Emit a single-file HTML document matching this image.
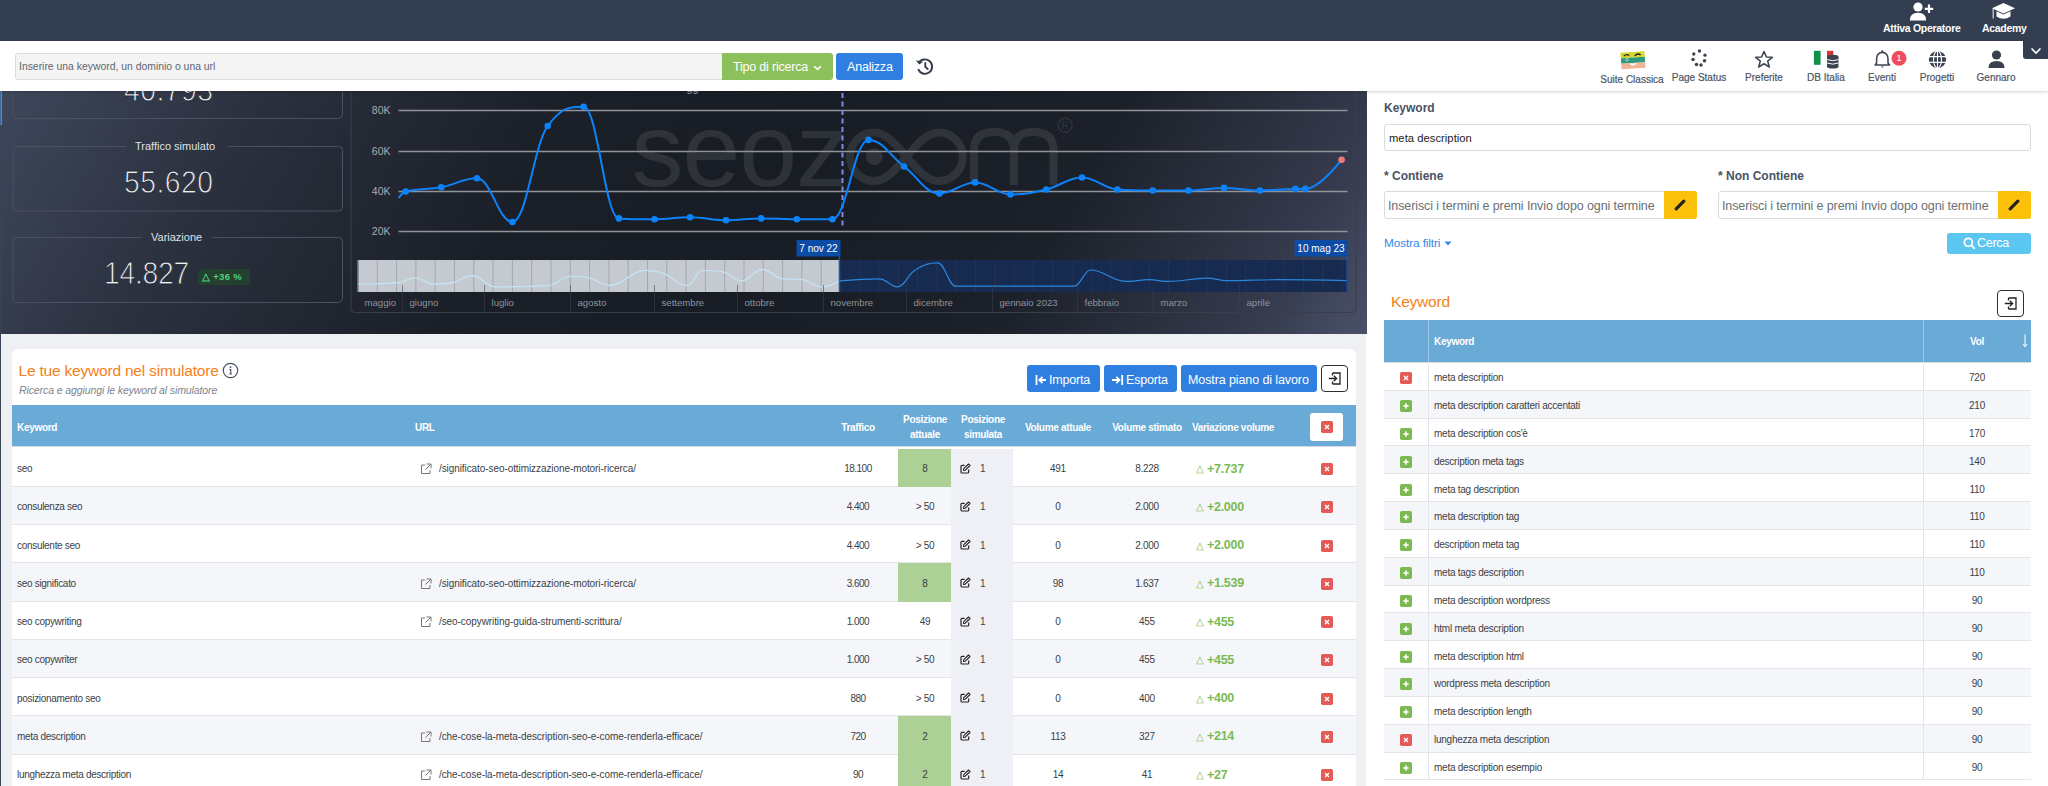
<!DOCTYPE html>
<html><head><meta charset="utf-8">
<style>
*{box-sizing:border-box}
html,body{margin:0;padding:0}
body{width:2048px;height:786px;overflow:hidden;position:relative;font-family:"Liberation Sans",sans-serif;background:#fff;color:#333}
.abs{position:absolute}
.t{position:absolute;white-space:nowrap;line-height:1}
#topbar{left:0;top:0;width:2048px;height:41px;background:#343e51}
#toolbar{left:0;top:41px;width:2048px;height:50px;background:#fff;box-shadow:0 1px 3px rgba(0,0,0,.18);z-index:5}
#chart{left:0;top:90px;width:1367px;height:244px;background:linear-gradient(120deg,#3f475c 0%,#2a303d 18%,#1b1f28 38%,#181c24 55%,#1c2029 75%,#353b4d 92%,#4a5068 100%);overflow:hidden}
#lower{left:0;top:334px;width:1366px;height:452px;background:#eff0f4}
#card{left:12px;top:349px;width:1344px;height:460px;background:#fff;border-radius:6px}
#right{left:1367px;top:90px;width:681px;height:696px;background:#fff}
.ico{position:absolute}
.lbl{position:absolute;font-size:10px;color:#4b5565;-webkit-text-stroke:0.2px #4b5565;white-space:nowrap;line-height:1;transform:translateX(-50%)}
</style></head><body>
<div id="topbar" class="abs">
  <!-- user plus icon -->
  <svg class="ico" style="left:1909px;top:2px" width="26" height="19" viewBox="0 0 26 19">
    <circle cx="9" cy="5" r="4.6" fill="#fff"/>
    <path d="M0.8 18.5 Q0.8 10.8 9 10.8 Q17.2 10.8 17.2 18.5 Z" fill="#fff"/>
    <path d="M20 2.5 V11 M15.8 6.8 H24.2" stroke="#fff" stroke-width="2.2" fill="none"/>
  </svg>
  <div class="t" style="left:1883px;top:23px;font-size:10.5px;color:#fff;font-weight:bold;letter-spacing:-0.3px">Attiva Operatore</div>
  <!-- graduation cap -->
  <svg class="ico" style="left:1991px;top:2px" width="25" height="19" viewBox="0 0 25 19">
    <path d="M12.5 1 L24 6.3 L12.5 11.6 L1 6.3 Z" fill="#fff"/>
    <path d="M5.5 9.2 V14.5 Q12.5 19 19.5 14.5 V9.2 L12.5 12.6 Z" fill="#fff"/>
    <path d="M2.2 7 V16.5" stroke="#d8dbe0" stroke-width="1.2"/>
  </svg>
  <div class="t" style="left:1982px;top:23px;font-size:10.5px;color:#fff;font-weight:bold;letter-spacing:-0.3px">Academy</div>
</div>
<div id="toolbar" class="abs">
  <div class="abs" style="left:15px;top:12px;width:708px;height:27px;background:#f4f4f5;border:1px solid #dcdcdc;border-radius:3px 0 0 3px"></div>
  <div class="t" style="left:19px;top:20.5px;font-size:10.4px;color:#5f6670">Inserire una keyword, un dominio o una url</div>
  <div class="abs" style="left:722px;top:12px;width:111px;height:27px;background:#8bc05b;border-radius:0 3px 3px 0"></div>
  <div class="t" style="left:733px;top:19.5px;font-size:12.5px;color:#fff;letter-spacing:-0.2px">Tipo di ricerca</div>
  <svg class="ico" style="left:813px;top:24px" width="9" height="6" viewBox="0 0 9 6"><path d="M1.2 1.2 L4.5 4.4 L7.8 1.2" stroke="#fff" stroke-width="1.6" fill="none"/></svg>
  <div class="abs" style="left:836px;top:12px;width:67px;height:27px;background:#2f80e0;border-radius:3px"></div>
  <div class="t" style="left:847px;top:19.5px;font-size:12.5px;color:#fff;letter-spacing:-0.2px">Analizza</div>
  <!-- history icon -->
  <svg class="ico" style="left:915px;top:16px" width="20" height="19" viewBox="0 0 20 19">
    <path d="M3.6 6.2 A7.2 7.2 0 1 1 3.2 12.2" stroke="#333b48" stroke-width="1.9" fill="none"/>
    <path d="M0.8 3.2 L4.2 7.4 L8.0 5.0 Z" fill="#333b48"/>
    <path d="M10.3 5.3 V9.8 L13.3 12.6" stroke="#333b48" stroke-width="1.9" fill="none"/>
  </svg>

  <!-- Suite classica flag-face -->
  <svg class="ico" style="left:1620px;top:9px" width="26" height="20" viewBox="0 0 26 20">
    <g transform="rotate(-4 13 10)">
      <rect x="1" y="2" width="24" height="5.5" fill="#d6d62a"/>
      <rect x="1" y="7.5" width="24" height="5.5" fill="#2e9a7d"/>
      <rect x="1" y="13" width="24" height="5.5" fill="#f2b39b"/>
      <path d="M4 5.5 Q7 3 9.5 5.2" stroke="#222" stroke-width="1.3" fill="none"/>
      <path d="M15 6 Q18 3 21 5.5" stroke="#222" stroke-width="1.3" fill="none"/>
      <circle cx="7" cy="9.5" r="1.6" fill="#cfe"/>
      <circle cx="7" cy="9.5" r="0.8" fill="#234"/>
      <path d="M10 13.5 Q13 16 16 13.5" stroke="#fff" stroke-width="1.4" fill="#fff"/>
    </g>
  </svg>
  <div class="lbl" style="left:1632px;top:34px">Suite Classica</div>
  <!-- page status dots -->
  <svg class="ico" style="left:1689px;top:8px" width="20" height="19" viewBox="0 0 20 19">
    <circle cx="10.5" cy="2" r="1.75" fill="#3a4250"/>
    <circle cx="4.8" cy="5" r="1.65" fill="#3a4250"/>
    <circle cx="16" cy="6.2" r="1.65" fill="#3a4250"/>
    <circle cx="4" cy="10.5" r="1.75" fill="#3a4250"/>
    <circle cx="15.5" cy="11.8" r="1.75" fill="#3a4250"/>
    <circle cx="7.5" cy="15.5" r="1.75" fill="#3a4250"/>
    <circle cx="12" cy="16" r="1.75" fill="#3a4250"/>
  </svg>
  <div class="lbl" style="left:1699px;top:32px">Page Status</div>
  <!-- star -->
  <svg class="ico" style="left:1754px;top:9px" width="20" height="19" viewBox="0 0 20 19">
    <path d="M10 1.5 L12.4 7 L18.3 7.3 L13.7 11.1 L15.3 17 L10 13.7 L4.7 17 L6.3 11.1 L1.7 7.3 L7.6 7 Z" stroke="#3f4858" stroke-width="1.6" fill="none" stroke-linejoin="round"/>
  </svg>
  <div class="lbl" style="left:1764px;top:32px">Preferite</div>
  <!-- DB italia -->
  <svg class="ico" style="left:1813px;top:9px" width="26" height="20" viewBox="0 0 26 20">
    <rect x="0.9" y="0.8" width="6.7" height="14" fill="#119047"/>
    <rect x="14" y="0.8" width="6.3" height="7.5" fill="#d93438"/>
    <path d="M14 6.8 Q14 4.8 19.75 4.8 Q25.5 4.8 25.5 6.8 V16.5 Q25.5 18.6 19.75 18.6 Q14 18.6 14 16.5 Z" fill="#3a4250"/>
    <path d="M14 9.6 Q19.75 11.8 25.5 9.6 M14 13 Q19.75 15.2 25.5 13" stroke="#fff" stroke-width="1" fill="none"/>
  </svg>
  <div class="lbl" style="left:1826px;top:32px">DB Italia</div>
  <!-- bell -->
  <svg class="ico" style="left:1873px;top:9px" width="34" height="19" viewBox="0 0 34 19">
    <path d="M9.3 2.2 Q15 3 15 9 V13 L16.5 15 H2.1 L3.6 13 V9 Q3.6 3 9.3 2.2Z" stroke="#3a4250" stroke-width="1.5" fill="none" stroke-linejoin="round"/><circle cx="9.3" cy="1.4" r="1.1" fill="#3a4250"/>
    <path d="M7.6 16.6 Q9.3 18.4 11 16.6" fill="#3a4250"/>
    <circle cx="26" cy="8.3" r="7.5" fill="#ec4f5b"/>
    <text x="26" y="11.4" font-size="9" fill="#fff" text-anchor="middle" font-family="Liberation Sans">1</text>
  </svg>
  <div class="lbl" style="left:1882px;top:32px">Eventi</div>
  <!-- globe -->
  <svg class="ico" style="left:1928px;top:9px" width="19" height="19" viewBox="0 0 19 19">
    <circle cx="9.5" cy="9.5" r="8.6" fill="#3a4250"/>
    <path d="M1 6.6 H18 M1 12.4 H18 M9.5 0.9 V18.1" stroke="#fff" stroke-width="1.1"/>
    <ellipse cx="9.5" cy="9.5" rx="4" ry="8.6" stroke="#fff" stroke-width="1.1" fill="none"/>
  </svg>
  <div class="lbl" style="left:1937px;top:32px">Progetti</div>
  <!-- user -->
  <svg class="ico" style="left:1987px;top:9px" width="19" height="19" viewBox="0 0 19 19">
    <circle cx="9.5" cy="5" r="4.6" fill="#3a4250"/>
    <path d="M1.5 18 Q1.5 11 9.5 11 Q17.5 11 17.5 18 Z" fill="#3a4250"/>
  </svg>
  <div class="lbl" style="left:1996px;top:32px">Gennaro</div>
</div>
<div class="abs" style="left:2023px;top:41px;width:25px;height:18px;background:#343e51;border-radius:0 0 0 3px;z-index:6"></div>
<svg class="ico" style="left:2030px;top:47px;z-index:7" width="12" height="8" viewBox="0 0 12 8"><path d="M1.5 1.5 L6 6 L10.5 1.5" stroke="#fff" stroke-width="1.6" fill="none"/></svg>
<div id="chart" class="abs">
<svg class="abs" style="left:0;top:0" width="1367" height="244" viewBox="0 90 1366 244">
<rect x="0" y="90" width="1.5" height="35" fill="#3f8fe6"/>
<rect x="0" y="125" width="1" height="210" fill="#3a4658"/>
<rect x="12.5" y="40" width="329.5" height="78.5" rx="4" fill="none" stroke="#4a5163" stroke-width="1"/>
<path d="M126 146.5 H16.5 Q12.5 146.5 12.5 150.5 V207 Q12.5 211 16.5 211 H338 Q342 211 342 207 V150.5 Q342 146.5 338 146.5 H228" fill="none" stroke="#4a5163" stroke-width="1"/>
<path d="M141.5 237.5 H16.5 Q12.5 237.5 12.5 241.5 V298.5 Q12.5 302.5 16.5 302.5 H338 Q342 302.5 342 298.5 V241.5 Q342 237.5 338 237.5 H212" fill="none" stroke="#4a5163" stroke-width="1"/>
<rect x="350.5" y="40" width="1005" height="272.5" rx="4" fill="none" stroke="#383e4c" stroke-width="1"/>
<text x="631" y="185.5" font-family="Liberation Sans" font-size="104" letter-spacing="-1" fill="#ffffff" fill-opacity="0.095">seoz</text>
<path d="M873.8 132.5 A24.2 24.2 0 1 0 873.8 181 C897 181 915 132.5 938 132.5 A24.2 24.2 0 1 1 938 181 C915 181 897 132.5 873.8 132.5" stroke="#fff" stroke-opacity="0.095" stroke-width="8" fill="none"/>
<circle cx="873.8" cy="156.7" r="8.5" fill="#fff" fill-opacity="0.095"/>
<path d="M973.5 185 V150 Q973.5 132 993.5 132 Q1013.5 132 1013.5 150 V185 M1013.5 150 Q1013.5 132 1033 132 Q1053 132 1053 150 V185" stroke="#fff" stroke-opacity="0.095" stroke-width="8" fill="none"/>
<circle cx="1064.7" cy="125.2" r="7" fill="none" stroke="#fff" stroke-opacity="0.095" stroke-width="1.4"/>
<text x="1064.7" y="129" font-family="Liberation Sans" font-size="10" text-anchor="middle" fill="#fff" fill-opacity="0.095">R</text>
<text x="686" y="91.6" font-family="Liberation Sans" font-size="11" fill="#9aa0a8">gg</text>
<line x1="398" y1="110.5" x2="1347" y2="110.5" stroke="#909399" stroke-width="1.5"/>
<text x="390" y="114" font-family="Liberation Sans" font-size="10.5" text-anchor="end" fill="#a9acb2">80K</text>
<line x1="398" y1="151.5" x2="1347" y2="151.5" stroke="#909399" stroke-width="1.5"/>
<text x="390" y="155" font-family="Liberation Sans" font-size="10.5" text-anchor="end" fill="#a9acb2">60K</text>
<line x1="398" y1="191.5" x2="1347" y2="191.5" stroke="#909399" stroke-width="1.5"/>
<text x="390" y="195" font-family="Liberation Sans" font-size="10.5" text-anchor="end" fill="#a9acb2">40K</text>
<line x1="398" y1="231.5" x2="1347" y2="231.5" stroke="#909399" stroke-width="1.5"/>
<text x="390" y="235" font-family="Liberation Sans" font-size="10.5" text-anchor="end" fill="#a9acb2">20K</text>
<line x1="842" y1="93" x2="842" y2="226" stroke="#8a86e8" stroke-width="2" stroke-dasharray="5 3.5"/>
<path d="M398.0 198.0 C398.0 198.0 402.3 192.2 405.2 191.5 C419.4 187.9 426.6 189.9 440.8 187.3 C455.0 184.7 462.2 178.3 476.4 178.3 C490.6 178.3 497.8 222.0 512.0 222.0 C526.1 222.0 533.1 145.2 547.2 126.0 C561.6 106.8 568.7 106.8 583.1 106.8 C597.2 106.8 604.3 217.5 618.4 218.4 C632.6 219.3 639.8 219.3 654.0 219.3 C668.2 219.3 675.4 217.2 689.6 217.2 C704.0 217.2 711.1 220.2 725.5 220.2 C739.6 220.2 746.6 218.4 760.7 218.4 C774.9 218.4 782.1 219.3 796.3 219.3 C810.5 219.3 817.7 219.3 831.9 219.3 C846.3 219.3 853.5 139.9 867.9 139.9 C882.2 139.9 889.3 155.8 903.6 166.5 C917.8 177.2 924.8 193.4 939.0 193.4 C953.3 193.4 960.4 182.4 974.7 182.4 C988.8 182.4 995.9 194.4 1010.0 194.4 C1024.3 194.4 1031.5 192.9 1045.8 189.5 C1060.1 186.1 1067.2 177.5 1081.5 177.5 C1095.7 177.5 1102.7 188.5 1116.9 189.5 C1131.0 190.5 1138.1 190.5 1152.2 190.5 C1166.5 190.5 1173.6 190.5 1187.9 190.5 C1202.2 190.5 1209.3 187.9 1223.6 187.9 C1237.9 187.9 1245.0 190.5 1259.3 190.5 C1273.6 190.5 1280.7 188.9 1295.0 188.9 C1298.9 188.9 1300.9 188.9 1304.8 188.9 C1319.3 188.9 1341.1 159.7 1341.1 159.7" stroke="#0c83fb" stroke-width="2" fill="none"/>
<circle cx="405.2" cy="191.5" r="3.3" fill="#0c83fb"/>
<circle cx="440.8" cy="187.3" r="3.3" fill="#0c83fb"/>
<circle cx="476.4" cy="178.3" r="3.3" fill="#0c83fb"/>
<circle cx="512" cy="222" r="3.3" fill="#0c83fb"/>
<circle cx="547.2" cy="126" r="3.3" fill="#0c83fb"/>
<circle cx="583.1" cy="106.8" r="3.3" fill="#0c83fb"/>
<circle cx="618.4" cy="218.4" r="3.3" fill="#0c83fb"/>
<circle cx="654" cy="219.3" r="3.3" fill="#0c83fb"/>
<circle cx="689.6" cy="217.2" r="3.3" fill="#0c83fb"/>
<circle cx="725.5" cy="220.2" r="3.3" fill="#0c83fb"/>
<circle cx="760.7" cy="218.4" r="3.3" fill="#0c83fb"/>
<circle cx="796.3" cy="219.3" r="3.3" fill="#0c83fb"/>
<circle cx="831.9" cy="219.3" r="3.3" fill="#0c83fb"/>
<circle cx="867.9" cy="139.9" r="3.3" fill="#0c83fb"/>
<circle cx="903.6" cy="166.5" r="3.3" fill="#0c83fb"/>
<circle cx="939" cy="193.4" r="3.3" fill="#0c83fb"/>
<circle cx="974.7" cy="182.4" r="3.3" fill="#0c83fb"/>
<circle cx="1010" cy="194.4" r="3.3" fill="#0c83fb"/>
<circle cx="1045.8" cy="189.5" r="3.3" fill="#0c83fb"/>
<circle cx="1081.5" cy="177.5" r="3.3" fill="#0c83fb"/>
<circle cx="1116.9" cy="189.5" r="3.3" fill="#0c83fb"/>
<circle cx="1152.2" cy="190.5" r="3.3" fill="#0c83fb"/>
<circle cx="1187.9" cy="190.5" r="3.3" fill="#0c83fb"/>
<circle cx="1223.6" cy="187.9" r="3.3" fill="#0c83fb"/>
<circle cx="1259.3" cy="190.5" r="3.3" fill="#0c83fb"/>
<circle cx="1295" cy="188.9" r="3.3" fill="#0c83fb"/>
<circle cx="1304.8" cy="188.9" r="3.3" fill="#0c83fb"/>
<circle cx="1341.1" cy="159.7" r="3.3" fill="#f07a78"/>
<rect x="358" y="260" width="989" height="32" fill="#16233a"/>
<rect x="838.5" y="260" width="508.5" height="32" fill="#172b50"/>
<line x1="357.5" y1="260" x2="357.5" y2="292" stroke="#223556" stroke-width="1"/>
<line x1="376.8" y1="260" x2="376.8" y2="292" stroke="#223556" stroke-width="1"/>
<line x1="396.1" y1="260" x2="396.1" y2="292" stroke="#223556" stroke-width="1"/>
<line x1="415.4" y1="260" x2="415.4" y2="292" stroke="#223556" stroke-width="1"/>
<line x1="434.7" y1="260" x2="434.7" y2="292" stroke="#223556" stroke-width="1"/>
<line x1="454.0" y1="260" x2="454.0" y2="292" stroke="#223556" stroke-width="1"/>
<line x1="473.3" y1="260" x2="473.3" y2="292" stroke="#223556" stroke-width="1"/>
<line x1="492.6" y1="260" x2="492.6" y2="292" stroke="#223556" stroke-width="1"/>
<line x1="511.9" y1="260" x2="511.9" y2="292" stroke="#223556" stroke-width="1"/>
<line x1="531.2" y1="260" x2="531.2" y2="292" stroke="#223556" stroke-width="1"/>
<line x1="550.5" y1="260" x2="550.5" y2="292" stroke="#223556" stroke-width="1"/>
<line x1="569.8" y1="260" x2="569.8" y2="292" stroke="#223556" stroke-width="1"/>
<line x1="589.1" y1="260" x2="589.1" y2="292" stroke="#223556" stroke-width="1"/>
<line x1="608.4" y1="260" x2="608.4" y2="292" stroke="#223556" stroke-width="1"/>
<line x1="627.7" y1="260" x2="627.7" y2="292" stroke="#223556" stroke-width="1"/>
<line x1="647.0" y1="260" x2="647.0" y2="292" stroke="#223556" stroke-width="1"/>
<line x1="666.3" y1="260" x2="666.3" y2="292" stroke="#223556" stroke-width="1"/>
<line x1="685.6" y1="260" x2="685.6" y2="292" stroke="#223556" stroke-width="1"/>
<line x1="704.9" y1="260" x2="704.9" y2="292" stroke="#223556" stroke-width="1"/>
<line x1="724.2" y1="260" x2="724.2" y2="292" stroke="#223556" stroke-width="1"/>
<line x1="743.5" y1="260" x2="743.5" y2="292" stroke="#223556" stroke-width="1"/>
<line x1="762.8" y1="260" x2="762.8" y2="292" stroke="#223556" stroke-width="1"/>
<line x1="782.1" y1="260" x2="782.1" y2="292" stroke="#223556" stroke-width="1"/>
<line x1="801.4" y1="260" x2="801.4" y2="292" stroke="#223556" stroke-width="1"/>
<line x1="820.7" y1="260" x2="820.7" y2="292" stroke="#223556" stroke-width="1"/>
<line x1="840.0" y1="260" x2="840.0" y2="292" stroke="#223556" stroke-width="1"/>
<line x1="859.3" y1="260" x2="859.3" y2="292" stroke="#223556" stroke-width="1"/>
<line x1="878.6" y1="260" x2="878.6" y2="292" stroke="#223556" stroke-width="1"/>
<line x1="897.9" y1="260" x2="897.9" y2="292" stroke="#223556" stroke-width="1"/>
<line x1="917.2" y1="260" x2="917.2" y2="292" stroke="#223556" stroke-width="1"/>
<line x1="936.5" y1="260" x2="936.5" y2="292" stroke="#223556" stroke-width="1"/>
<line x1="955.8" y1="260" x2="955.8" y2="292" stroke="#223556" stroke-width="1"/>
<line x1="975.1" y1="260" x2="975.1" y2="292" stroke="#223556" stroke-width="1"/>
<line x1="994.4" y1="260" x2="994.4" y2="292" stroke="#223556" stroke-width="1"/>
<line x1="1013.7" y1="260" x2="1013.7" y2="292" stroke="#223556" stroke-width="1"/>
<line x1="1033.0" y1="260" x2="1033.0" y2="292" stroke="#223556" stroke-width="1"/>
<line x1="1052.3" y1="260" x2="1052.3" y2="292" stroke="#223556" stroke-width="1"/>
<line x1="1071.6" y1="260" x2="1071.6" y2="292" stroke="#223556" stroke-width="1"/>
<line x1="1090.9" y1="260" x2="1090.9" y2="292" stroke="#223556" stroke-width="1"/>
<line x1="1110.2" y1="260" x2="1110.2" y2="292" stroke="#223556" stroke-width="1"/>
<line x1="1129.5" y1="260" x2="1129.5" y2="292" stroke="#223556" stroke-width="1"/>
<line x1="1148.8" y1="260" x2="1148.8" y2="292" stroke="#223556" stroke-width="1"/>
<line x1="1168.1" y1="260" x2="1168.1" y2="292" stroke="#223556" stroke-width="1"/>
<line x1="1187.4" y1="260" x2="1187.4" y2="292" stroke="#223556" stroke-width="1"/>
<line x1="1206.7" y1="260" x2="1206.7" y2="292" stroke="#223556" stroke-width="1"/>
<line x1="1226.0" y1="260" x2="1226.0" y2="292" stroke="#223556" stroke-width="1"/>
<line x1="1245.3" y1="260" x2="1245.3" y2="292" stroke="#223556" stroke-width="1"/>
<line x1="1264.6" y1="260" x2="1264.6" y2="292" stroke="#223556" stroke-width="1"/>
<line x1="1283.9" y1="260" x2="1283.9" y2="292" stroke="#223556" stroke-width="1"/>
<line x1="1303.2" y1="260" x2="1303.2" y2="292" stroke="#223556" stroke-width="1"/>
<line x1="1322.5" y1="260" x2="1322.5" y2="292" stroke="#223556" stroke-width="1"/>
<line x1="1341.8" y1="260" x2="1341.8" y2="292" stroke="#223556" stroke-width="1"/>
<rect x="358" y="260" width="480.5" height="32" fill="#d3d6dc" fill-opacity="0.93"/>
<line x1="357.5" y1="260" x2="357.5" y2="292" stroke="#a3a7ae" stroke-width="1"/>
<line x1="376.8" y1="260" x2="376.8" y2="292" stroke="#a3a7ae" stroke-width="1"/>
<line x1="396.1" y1="260" x2="396.1" y2="292" stroke="#a3a7ae" stroke-width="1"/>
<line x1="415.4" y1="260" x2="415.4" y2="292" stroke="#a3a7ae" stroke-width="1"/>
<line x1="434.7" y1="260" x2="434.7" y2="292" stroke="#a3a7ae" stroke-width="1"/>
<line x1="454.0" y1="260" x2="454.0" y2="292" stroke="#a3a7ae" stroke-width="1"/>
<line x1="473.3" y1="260" x2="473.3" y2="292" stroke="#a3a7ae" stroke-width="1"/>
<line x1="492.6" y1="260" x2="492.6" y2="292" stroke="#a3a7ae" stroke-width="1"/>
<line x1="511.9" y1="260" x2="511.9" y2="292" stroke="#a3a7ae" stroke-width="1"/>
<line x1="531.2" y1="260" x2="531.2" y2="292" stroke="#a3a7ae" stroke-width="1"/>
<line x1="550.5" y1="260" x2="550.5" y2="292" stroke="#a3a7ae" stroke-width="1"/>
<line x1="569.8" y1="260" x2="569.8" y2="292" stroke="#a3a7ae" stroke-width="1"/>
<line x1="589.1" y1="260" x2="589.1" y2="292" stroke="#a3a7ae" stroke-width="1"/>
<line x1="608.4" y1="260" x2="608.4" y2="292" stroke="#a3a7ae" stroke-width="1"/>
<line x1="627.7" y1="260" x2="627.7" y2="292" stroke="#a3a7ae" stroke-width="1"/>
<line x1="647.0" y1="260" x2="647.0" y2="292" stroke="#a3a7ae" stroke-width="1"/>
<line x1="666.3" y1="260" x2="666.3" y2="292" stroke="#a3a7ae" stroke-width="1"/>
<line x1="685.6" y1="260" x2="685.6" y2="292" stroke="#a3a7ae" stroke-width="1"/>
<line x1="704.9" y1="260" x2="704.9" y2="292" stroke="#a3a7ae" stroke-width="1"/>
<line x1="724.2" y1="260" x2="724.2" y2="292" stroke="#a3a7ae" stroke-width="1"/>
<line x1="743.5" y1="260" x2="743.5" y2="292" stroke="#a3a7ae" stroke-width="1"/>
<line x1="762.8" y1="260" x2="762.8" y2="292" stroke="#a3a7ae" stroke-width="1"/>
<line x1="782.1" y1="260" x2="782.1" y2="292" stroke="#a3a7ae" stroke-width="1"/>
<line x1="801.4" y1="260" x2="801.4" y2="292" stroke="#a3a7ae" stroke-width="1"/>
<line x1="820.7" y1="260" x2="820.7" y2="292" stroke="#a3a7ae" stroke-width="1"/>
<path d="M358.0 283.9 C358.0 283.9 383.1 283.9 399.8 282.4 C405.8 280.9 408.8 277.9 414.8 277.9 C422.0 277.9 425.5 283.9 432.7 283.9 C439.9 283.9 443.4 283.9 450.6 283.0 C459.0 282.1 463.2 275.5 471.6 275.5 C481.2 275.5 485.9 286.9 495.5 286.9 C517.0 286.9 527.8 286.9 549.3 285.4 C557.7 283.9 561.9 276.4 570.3 276.4 C577.5 276.4 581.0 276.4 588.2 277.9 C596.6 279.4 600.7 285.4 609.1 285.4 C623.5 285.4 630.6 270.4 645.0 270.4 C652.2 270.4 655.8 270.8 663.0 273.4 C672.6 276.8 677.3 285.4 686.9 285.4 C692.9 285.4 695.8 270.4 701.8 270.4 C710.2 270.4 714.4 270.4 722.8 271.9 C730.0 273.4 733.5 280.9 740.7 280.9 C749.1 280.9 753.2 269.5 761.6 269.5 C770.0 269.5 774.2 278.2 782.6 278.8 C789.8 279.4 793.3 278.8 800.5 279.4 C808.9 280.0 813.1 286.9 821.5 286.9 C828.4 286.9 838.8 280.9 838.8 280.9" stroke="#c4e4f4" stroke-width="1.3" fill="none"/>
<path d="M838.8 280.9 C838.8 280.9 862.9 278.8 879.0 278.8 C886.1 278.8 889.7 286.9 896.8 286.9 C904.0 286.9 907.5 274.2 914.7 270.0 C923.8 264.6 928.3 262.9 937.4 262.9 C944.5 262.9 948.1 286.2 955.2 286.2 C1002.6 286.2 1026.3 286.2 1073.7 286.2 C1080.2 286.2 1083.5 270.0 1090.0 270.0 C1104.2 270.0 1111.4 281.4 1125.6 281.4 C1134.7 281.4 1139.2 279.7 1148.3 279.7 C1156.1 279.7 1160.0 281.4 1167.8 281.4 C1183.4 281.4 1191.2 278.1 1206.8 278.1 C1214.6 278.1 1218.4 280.7 1226.2 280.7 C1247.0 280.7 1257.4 279.7 1278.2 279.7 C1305.4 279.7 1346.3 280.7 1346.3 280.7" stroke="#2a86dc" stroke-width="1.2" fill="none"/>
<line x1="838.8" y1="256" x2="838.8" y2="292" stroke="#1f5fc0" stroke-width="1.2"/>
<line x1="1346.5" y1="256" x2="1346.5" y2="292" stroke="#1f5fc0" stroke-width="1"/>
<rect x="796" y="240" width="44" height="16.5" fill="#0c4ba6"/>
<text x="818" y="252" font-family="Liberation Sans" font-size="10" text-anchor="middle" fill="#fff">7 nov 22</text>
<rect x="1294" y="240" width="53" height="16.5" fill="#0c4ba6"/>
<text x="1320.5" y="252" font-family="Liberation Sans" font-size="10" text-anchor="middle" fill="#fff">10 mag 23</text>
<text x="364" y="305.5" font-family="Liberation Sans" font-size="9.6" fill="#8d939c">maggio</text>
<line x1="402" y1="285" x2="402" y2="312" stroke="#3a4050" stroke-opacity="0.55" stroke-width="1"/>
<text x="409" y="305.5" font-family="Liberation Sans" font-size="9.6" fill="#8d939c">giugno</text>
<line x1="484" y1="285" x2="484" y2="312" stroke="#3a4050" stroke-opacity="0.55" stroke-width="1"/>
<text x="491" y="305.5" font-family="Liberation Sans" font-size="9.6" fill="#8d939c">luglio</text>
<line x1="570" y1="285" x2="570" y2="312" stroke="#3a4050" stroke-opacity="0.55" stroke-width="1"/>
<text x="577" y="305.5" font-family="Liberation Sans" font-size="9.6" fill="#8d939c">agosto</text>
<line x1="654" y1="285" x2="654" y2="312" stroke="#3a4050" stroke-opacity="0.55" stroke-width="1"/>
<text x="661" y="305.5" font-family="Liberation Sans" font-size="9.6" fill="#8d939c">settembre</text>
<line x1="737" y1="285" x2="737" y2="312" stroke="#3a4050" stroke-opacity="0.55" stroke-width="1"/>
<text x="744" y="305.5" font-family="Liberation Sans" font-size="9.6" fill="#8d939c">ottobre</text>
<line x1="823" y1="285" x2="823" y2="312" stroke="#3a4050" stroke-opacity="0.55" stroke-width="1"/>
<text x="830" y="305.5" font-family="Liberation Sans" font-size="9.6" fill="#8d939c">novembre</text>
<line x1="906" y1="285" x2="906" y2="312" stroke="#3a4050" stroke-opacity="0.55" stroke-width="1"/>
<text x="913" y="305.5" font-family="Liberation Sans" font-size="9.6" fill="#8d939c">dicembre</text>
<line x1="992" y1="285" x2="992" y2="312" stroke="#3a4050" stroke-opacity="0.55" stroke-width="1"/>
<text x="999" y="305.5" font-family="Liberation Sans" font-size="9.6" fill="#8d939c">gennaio 2023</text>
<line x1="1077" y1="285" x2="1077" y2="312" stroke="#3a4050" stroke-opacity="0.55" stroke-width="1"/>
<text x="1084" y="305.5" font-family="Liberation Sans" font-size="9.6" fill="#8d939c">febbraio</text>
<line x1="1153" y1="285" x2="1153" y2="312" stroke="#3a4050" stroke-opacity="0.55" stroke-width="1"/>
<text x="1160" y="305.5" font-family="Liberation Sans" font-size="9.6" fill="#8d939c">marzo</text>
<line x1="1239" y1="285" x2="1239" y2="312" stroke="#3a4050" stroke-opacity="0.55" stroke-width="1"/>
<text x="1246" y="305.5" font-family="Liberation Sans" font-size="9.6" fill="#8d939c">aprile</text>
</svg>
<div class="t" style="left:123.5px;top:-15px;font-size:31.5px;letter-spacing:-0.3px;color:#eceef1;-webkit-text-stroke:0.9px #262b37;transform-origin:0 0;transform:scaleX(0.9);letter-spacing:0.5px">40.793</div>
<div class="t" style="left:135px;top:51px;font-size:11px;color:#dfe1e5">Traffico simulato</div>
<div class="t" style="left:123.5px;top:76.5px;font-size:31.5px;letter-spacing:-0.3px;color:#eceef1;-webkit-text-stroke:0.9px #262b37;transform-origin:0 0;transform:scaleX(0.9);letter-spacing:0.5px">55.620</div>
<div class="t" style="left:151px;top:142px;font-size:11px;color:#dfe1e5">Variazione</div>
<div class="t" style="left:103.5px;top:167.5px;font-size:31.5px;letter-spacing:-0.3px;color:#eceef1;-webkit-text-stroke:0.9px #262b37;transform-origin:0 0;transform:scaleX(0.9)">14.827</div>
<div class="abs" style="left:198px;top:178.5px;width:52px;height:16px;background:#24402f;border-radius:3px"></div>
<div class="t" style="left:202px;top:182px;font-size:9.5px;font-weight:bold;letter-spacing:0.3px;color:#4fd07e">&#9651; +36 %</div>
</div><div id="lower" class="abs"></div>
<div class="abs" style="left:0;top:334px;width:1px;height:452px;background:#3a4658"></div>
<div id="card" class="abs"></div>
<div class="t" style="left:18.5px;top:363px;font-size:15.5px;color:#f47f20;letter-spacing:-0.2px">Le tue keyword nel simulatore</div>
<svg class="ico" style="left:222px;top:362px" width="17" height="17" viewBox="0 0 17 17"><circle cx="8.5" cy="8.5" r="7.2" fill="none" stroke="#4a5263" stroke-width="1.2"/><circle cx="8.5" cy="5.2" r="0.9" fill="#4a5263"/><path d="M7.4 7.6 H8.8 V12 M7.3 12 H9.9" stroke="#4a5263" stroke-width="1.1" fill="none"/></svg>
<div class="t" style="left:19px;top:385px;font-size:10.5px;font-style:italic;color:#7d838c;letter-spacing:-0.1px">Ricerca e aggiungi le keyword al simulatore</div>
<div class="abs" style="left:1027px;top:365px;width:73px;height:27px;background:#2f7fe0;border-radius:3px"></div>
<div class="abs" style="left:1104px;top:365px;width:73px;height:27px;background:#2f7fe0;border-radius:3px"></div>
<div class="abs" style="left:1181px;top:365px;width:136px;height:27px;background:#2f7fe0;border-radius:3px"></div>
<svg class="ico" style="left:1035px;top:374px" width="12" height="12" viewBox="0 0 12 12"><path d="M1.5 1 V11" stroke="#fff" stroke-width="1.8"/><path d="M11 6 H4.5 M7.5 2.8 L4.3 6 L7.5 9.2" stroke="#fff" stroke-width="1.8" fill="none"/></svg>
<div class="t" style="left:1049px;top:373.5px;font-size:12.5px;color:#fff;letter-spacing:-0.2px">Importa</div>
<svg class="ico" style="left:1111px;top:374px" width="13" height="12" viewBox="0 0 13 12"><path d="M11.2 1 V11" stroke="#fff" stroke-width="1.8"/><path d="M1 6 H8.2 M5.3 2.8 L8.5 6 L5.3 9.2" stroke="#fff" stroke-width="1.8" fill="none"/></svg>
<div class="t" style="left:1126px;top:373.5px;font-size:12.5px;color:#fff;letter-spacing:-0.2px">Esporta</div>
<div class="t" style="left:1188px;top:373.5px;font-size:12.5px;color:#fff;letter-spacing:-0.1px">Mostra piano di lavoro</div>
<div class="abs" style="left:1321px;top:365px;width:27px;height:27px;border:1.3px solid #2b2f36;border-radius:4px;background:#fff"></div>
<svg class="ico" style="left:1328px;top:372px" width="13" height="13" viewBox="0 0 13 13"><path d="M4.5 1 H12 V12 H4.5 M4.5 1 V3.5 M4.5 12 V9.5" stroke="#222" stroke-width="1.3" fill="none"/><path d="M0.8 6.5 H8.5 M5.8 3.8 L8.6 6.5 L5.8 9.2" stroke="#222" stroke-width="1.3" fill="none"/></svg>
<div class="abs" style="left:12px;top:405px;width:1344px;height:42px;background:#6aaad6;border-bottom:1.5px solid #d6d9de"></div>
<div class="t" style="left:17px;top:422.5px;font-size:10px;font-weight:bold;color:#fff;letter-spacing:-0.3px">Keyword</div>
<div class="t" style="left:415px;top:422.5px;font-size:10px;font-weight:bold;color:#fff;letter-spacing:-0.3px">URL</div>
<div class="t" style="left:858px;top:422.5px;font-size:10px;font-weight:bold;color:#fff;letter-spacing:-0.3px;transform:translateX(-50%)">Traffico</div>
<div class="t" style="left:925px;top:415px;font-size:10px;font-weight:bold;color:#fff;letter-spacing:-0.3px;transform:translateX(-50%)">Posizione</div>
<div class="t" style="left:925px;top:430px;font-size:10px;font-weight:bold;color:#fff;letter-spacing:-0.3px;transform:translateX(-50%)">attuale</div>
<div class="t" style="left:983px;top:415px;font-size:10px;font-weight:bold;color:#fff;letter-spacing:-0.3px;transform:translateX(-50%)">Posizione</div>
<div class="t" style="left:983px;top:430px;font-size:10px;font-weight:bold;color:#fff;letter-spacing:-0.3px;transform:translateX(-50%)">simulata</div>
<div class="t" style="left:1058px;top:422.5px;font-size:10px;font-weight:bold;color:#fff;letter-spacing:-0.3px;transform:translateX(-50%)">Volume attuale</div>
<div class="t" style="left:1147px;top:422.5px;font-size:10px;font-weight:bold;color:#fff;letter-spacing:-0.3px;transform:translateX(-50%)">Volume stimato</div>
<div class="t" style="left:1233px;top:422.5px;font-size:10px;font-weight:bold;color:#fff;letter-spacing:-0.3px;transform:translateX(-50%)">Variazione volume</div>
<div class="abs" style="left:1310px;top:413px;width:33px;height:28px;background:#fff;border-radius:3px"></div>
<svg class="ico" style="left:1321.0px;top:421.0px" width="12" height="12" viewBox="0 0 12 12"><rect width="12" height="12" rx="1.8" fill="#e35a57"/><path d="M4 4 L8 8 M8 4 L4 8" stroke="#fff" stroke-width="1.4"/></svg>
<div class="abs" style="left:12px;top:448.5px;width:1344px;height:38.25px;background:#ffffff;border-bottom:1.5px solid #e2e4e8"></div>
<div class="abs" style="left:951px;top:448.5px;width:62px;height:38.25px;background:#eff0f5"></div>
<div class="abs" style="left:898px;top:448.5px;width:53px;height:38.25px;background:#acd096"></div>
<div class="t" style="left:17px;top:464.125px;font-size:10px;color:#3a3f47;letter-spacing:-0.3px">seo</div>
<svg class="ico" style="left:420px;top:463.125px" width="12" height="12" viewBox="0 0 12 12"><path d="M5 2 H1.5 V10.5 H10 V7" stroke="#777" stroke-width="1" fill="none"/><path d="M6.5 1 H11 V5.5 M11 1 L5.5 6.5" stroke="#777" stroke-width="1" fill="none"/></svg>
<div class="t" style="left:439px;top:464.125px;font-size:10px;color:#3a3f47;letter-spacing:-0.3px;letter-spacing:-0.08px">/significato-seo-ottimizzazione-motori-ricerca/</div>
<div class="t" style="left:858px;top:464.125px;font-size:10px;color:#3a3f47;letter-spacing:-0.3px;letter-spacing:-0.55px;transform:translateX(-50%)">18.100</div>
<div class="t" style="left:925px;top:464.125px;font-size:10px;color:#3a3f47;letter-spacing:-0.3px;transform:translateX(-50%)">8</div>
<svg class="ico" style="left:959.5px;top:462.625px" width="11" height="11" viewBox="0 0 11 11"><path d="M4.6 2.3 H2.1 Q1 2.3 1 3.4 V8.9 Q1 10 2.1 10 H7.6 Q8.7 10 8.7 8.9 V6.4" stroke="#222" stroke-width="1.2" fill="none"/><path d="M8.5 1 L10 2.5 L5.3 7.2 L3.5 7.5 L3.8 5.7 Z" stroke="#222" stroke-width="1.1" fill="none" stroke-linejoin="round"/></svg>
<div class="t" style="left:980px;top:464.125px;font-size:10px;color:#3a3f47;letter-spacing:-0.3px">1</div>
<div class="t" style="left:1058px;top:464.125px;font-size:10px;color:#3a3f47;letter-spacing:-0.3px;transform:translateX(-50%)">491</div>
<div class="t" style="left:1147px;top:464.125px;font-size:10px;color:#3a3f47;letter-spacing:-0.3px;transform:translateX(-50%)">8.228</div>
<div class="t" style="left:1196px;top:464.125px;font-size:10px;color:#7aba55">&#9651;</div>
<div class="t" style="left:1207px;top:462.625px;font-size:12.5px;font-weight:bold;color:#7aba55;letter-spacing:-0.3px">+7.737</div>
<svg class="ico" style="left:1321.0px;top:463.125px" width="12" height="12" viewBox="0 0 12 12"><rect width="12" height="12" rx="1.8" fill="#e35a57"/><path d="M4 4 L8 8 M8 4 L4 8" stroke="#fff" stroke-width="1.4"/></svg>
<div class="abs" style="left:12px;top:486.75px;width:1344px;height:38.25px;background:#f5f6f9;border-bottom:1.5px solid #e2e4e8"></div>
<div class="abs" style="left:951px;top:486.75px;width:62px;height:38.25px;background:#eff0f5"></div>
<div class="t" style="left:17px;top:502.375px;font-size:10px;color:#3a3f47;letter-spacing:-0.3px">consulenza seo</div>
<div class="t" style="left:858px;top:502.375px;font-size:10px;color:#3a3f47;letter-spacing:-0.3px;letter-spacing:-0.55px;transform:translateX(-50%)">4.400</div>
<div class="t" style="left:925px;top:502.375px;font-size:10px;color:#3a3f47;letter-spacing:-0.3px;transform:translateX(-50%)">&gt; 50</div>
<svg class="ico" style="left:959.5px;top:500.875px" width="11" height="11" viewBox="0 0 11 11"><path d="M4.6 2.3 H2.1 Q1 2.3 1 3.4 V8.9 Q1 10 2.1 10 H7.6 Q8.7 10 8.7 8.9 V6.4" stroke="#222" stroke-width="1.2" fill="none"/><path d="M8.5 1 L10 2.5 L5.3 7.2 L3.5 7.5 L3.8 5.7 Z" stroke="#222" stroke-width="1.1" fill="none" stroke-linejoin="round"/></svg>
<div class="t" style="left:980px;top:502.375px;font-size:10px;color:#3a3f47;letter-spacing:-0.3px">1</div>
<div class="t" style="left:1058px;top:502.375px;font-size:10px;color:#3a3f47;letter-spacing:-0.3px;transform:translateX(-50%)">0</div>
<div class="t" style="left:1147px;top:502.375px;font-size:10px;color:#3a3f47;letter-spacing:-0.3px;transform:translateX(-50%)">2.000</div>
<div class="t" style="left:1196px;top:502.375px;font-size:10px;color:#7aba55">&#9651;</div>
<div class="t" style="left:1207px;top:500.875px;font-size:12.5px;font-weight:bold;color:#7aba55;letter-spacing:-0.3px">+2.000</div>
<svg class="ico" style="left:1321.0px;top:501.375px" width="12" height="12" viewBox="0 0 12 12"><rect width="12" height="12" rx="1.8" fill="#e35a57"/><path d="M4 4 L8 8 M8 4 L4 8" stroke="#fff" stroke-width="1.4"/></svg>
<div class="abs" style="left:12px;top:525.0px;width:1344px;height:38.25px;background:#ffffff;border-bottom:1.5px solid #e2e4e8"></div>
<div class="abs" style="left:951px;top:525.0px;width:62px;height:38.25px;background:#eff0f5"></div>
<div class="t" style="left:17px;top:540.625px;font-size:10px;color:#3a3f47;letter-spacing:-0.3px">consulente seo</div>
<div class="t" style="left:858px;top:540.625px;font-size:10px;color:#3a3f47;letter-spacing:-0.3px;letter-spacing:-0.55px;transform:translateX(-50%)">4.400</div>
<div class="t" style="left:925px;top:540.625px;font-size:10px;color:#3a3f47;letter-spacing:-0.3px;transform:translateX(-50%)">&gt; 50</div>
<svg class="ico" style="left:959.5px;top:539.125px" width="11" height="11" viewBox="0 0 11 11"><path d="M4.6 2.3 H2.1 Q1 2.3 1 3.4 V8.9 Q1 10 2.1 10 H7.6 Q8.7 10 8.7 8.9 V6.4" stroke="#222" stroke-width="1.2" fill="none"/><path d="M8.5 1 L10 2.5 L5.3 7.2 L3.5 7.5 L3.8 5.7 Z" stroke="#222" stroke-width="1.1" fill="none" stroke-linejoin="round"/></svg>
<div class="t" style="left:980px;top:540.625px;font-size:10px;color:#3a3f47;letter-spacing:-0.3px">1</div>
<div class="t" style="left:1058px;top:540.625px;font-size:10px;color:#3a3f47;letter-spacing:-0.3px;transform:translateX(-50%)">0</div>
<div class="t" style="left:1147px;top:540.625px;font-size:10px;color:#3a3f47;letter-spacing:-0.3px;transform:translateX(-50%)">2.000</div>
<div class="t" style="left:1196px;top:540.625px;font-size:10px;color:#7aba55">&#9651;</div>
<div class="t" style="left:1207px;top:539.125px;font-size:12.5px;font-weight:bold;color:#7aba55;letter-spacing:-0.3px">+2.000</div>
<svg class="ico" style="left:1321.0px;top:539.625px" width="12" height="12" viewBox="0 0 12 12"><rect width="12" height="12" rx="1.8" fill="#e35a57"/><path d="M4 4 L8 8 M8 4 L4 8" stroke="#fff" stroke-width="1.4"/></svg>
<div class="abs" style="left:12px;top:563.25px;width:1344px;height:38.25px;background:#f5f6f9;border-bottom:1.5px solid #e2e4e8"></div>
<div class="abs" style="left:951px;top:563.25px;width:62px;height:38.25px;background:#eff0f5"></div>
<div class="abs" style="left:898px;top:563.25px;width:53px;height:38.25px;background:#acd096"></div>
<div class="t" style="left:17px;top:578.875px;font-size:10px;color:#3a3f47;letter-spacing:-0.3px">seo significato</div>
<svg class="ico" style="left:420px;top:577.875px" width="12" height="12" viewBox="0 0 12 12"><path d="M5 2 H1.5 V10.5 H10 V7" stroke="#777" stroke-width="1" fill="none"/><path d="M6.5 1 H11 V5.5 M11 1 L5.5 6.5" stroke="#777" stroke-width="1" fill="none"/></svg>
<div class="t" style="left:439px;top:578.875px;font-size:10px;color:#3a3f47;letter-spacing:-0.3px;letter-spacing:-0.08px">/significato-seo-ottimizzazione-motori-ricerca/</div>
<div class="t" style="left:858px;top:578.875px;font-size:10px;color:#3a3f47;letter-spacing:-0.3px;letter-spacing:-0.55px;transform:translateX(-50%)">3.600</div>
<div class="t" style="left:925px;top:578.875px;font-size:10px;color:#3a3f47;letter-spacing:-0.3px;transform:translateX(-50%)">8</div>
<svg class="ico" style="left:959.5px;top:577.375px" width="11" height="11" viewBox="0 0 11 11"><path d="M4.6 2.3 H2.1 Q1 2.3 1 3.4 V8.9 Q1 10 2.1 10 H7.6 Q8.7 10 8.7 8.9 V6.4" stroke="#222" stroke-width="1.2" fill="none"/><path d="M8.5 1 L10 2.5 L5.3 7.2 L3.5 7.5 L3.8 5.7 Z" stroke="#222" stroke-width="1.1" fill="none" stroke-linejoin="round"/></svg>
<div class="t" style="left:980px;top:578.875px;font-size:10px;color:#3a3f47;letter-spacing:-0.3px">1</div>
<div class="t" style="left:1058px;top:578.875px;font-size:10px;color:#3a3f47;letter-spacing:-0.3px;transform:translateX(-50%)">98</div>
<div class="t" style="left:1147px;top:578.875px;font-size:10px;color:#3a3f47;letter-spacing:-0.3px;transform:translateX(-50%)">1.637</div>
<div class="t" style="left:1196px;top:578.875px;font-size:10px;color:#7aba55">&#9651;</div>
<div class="t" style="left:1207px;top:577.375px;font-size:12.5px;font-weight:bold;color:#7aba55;letter-spacing:-0.3px">+1.539</div>
<svg class="ico" style="left:1321.0px;top:577.875px" width="12" height="12" viewBox="0 0 12 12"><rect width="12" height="12" rx="1.8" fill="#e35a57"/><path d="M4 4 L8 8 M8 4 L4 8" stroke="#fff" stroke-width="1.4"/></svg>
<div class="abs" style="left:12px;top:601.5px;width:1344px;height:38.25px;background:#ffffff;border-bottom:1.5px solid #e2e4e8"></div>
<div class="abs" style="left:951px;top:601.5px;width:62px;height:38.25px;background:#eff0f5"></div>
<div class="t" style="left:17px;top:617.125px;font-size:10px;color:#3a3f47;letter-spacing:-0.3px">seo copywriting</div>
<svg class="ico" style="left:420px;top:616.125px" width="12" height="12" viewBox="0 0 12 12"><path d="M5 2 H1.5 V10.5 H10 V7" stroke="#777" stroke-width="1" fill="none"/><path d="M6.5 1 H11 V5.5 M11 1 L5.5 6.5" stroke="#777" stroke-width="1" fill="none"/></svg>
<div class="t" style="left:439px;top:617.125px;font-size:10px;color:#3a3f47;letter-spacing:-0.3px;letter-spacing:-0.08px">/seo-copywriting-guida-strumenti-scrittura/</div>
<div class="t" style="left:858px;top:617.125px;font-size:10px;color:#3a3f47;letter-spacing:-0.3px;letter-spacing:-0.55px;transform:translateX(-50%)">1.000</div>
<div class="t" style="left:925px;top:617.125px;font-size:10px;color:#3a3f47;letter-spacing:-0.3px;transform:translateX(-50%)">49</div>
<svg class="ico" style="left:959.5px;top:615.625px" width="11" height="11" viewBox="0 0 11 11"><path d="M4.6 2.3 H2.1 Q1 2.3 1 3.4 V8.9 Q1 10 2.1 10 H7.6 Q8.7 10 8.7 8.9 V6.4" stroke="#222" stroke-width="1.2" fill="none"/><path d="M8.5 1 L10 2.5 L5.3 7.2 L3.5 7.5 L3.8 5.7 Z" stroke="#222" stroke-width="1.1" fill="none" stroke-linejoin="round"/></svg>
<div class="t" style="left:980px;top:617.125px;font-size:10px;color:#3a3f47;letter-spacing:-0.3px">1</div>
<div class="t" style="left:1058px;top:617.125px;font-size:10px;color:#3a3f47;letter-spacing:-0.3px;transform:translateX(-50%)">0</div>
<div class="t" style="left:1147px;top:617.125px;font-size:10px;color:#3a3f47;letter-spacing:-0.3px;transform:translateX(-50%)">455</div>
<div class="t" style="left:1196px;top:617.125px;font-size:10px;color:#7aba55">&#9651;</div>
<div class="t" style="left:1207px;top:615.625px;font-size:12.5px;font-weight:bold;color:#7aba55;letter-spacing:-0.3px">+455</div>
<svg class="ico" style="left:1321.0px;top:616.125px" width="12" height="12" viewBox="0 0 12 12"><rect width="12" height="12" rx="1.8" fill="#e35a57"/><path d="M4 4 L8 8 M8 4 L4 8" stroke="#fff" stroke-width="1.4"/></svg>
<div class="abs" style="left:12px;top:639.75px;width:1344px;height:38.25px;background:#f5f6f9;border-bottom:1.5px solid #e2e4e8"></div>
<div class="abs" style="left:951px;top:639.75px;width:62px;height:38.25px;background:#eff0f5"></div>
<div class="t" style="left:17px;top:655.375px;font-size:10px;color:#3a3f47;letter-spacing:-0.3px">seo copywriter</div>
<div class="t" style="left:858px;top:655.375px;font-size:10px;color:#3a3f47;letter-spacing:-0.3px;letter-spacing:-0.55px;transform:translateX(-50%)">1.000</div>
<div class="t" style="left:925px;top:655.375px;font-size:10px;color:#3a3f47;letter-spacing:-0.3px;transform:translateX(-50%)">&gt; 50</div>
<svg class="ico" style="left:959.5px;top:653.875px" width="11" height="11" viewBox="0 0 11 11"><path d="M4.6 2.3 H2.1 Q1 2.3 1 3.4 V8.9 Q1 10 2.1 10 H7.6 Q8.7 10 8.7 8.9 V6.4" stroke="#222" stroke-width="1.2" fill="none"/><path d="M8.5 1 L10 2.5 L5.3 7.2 L3.5 7.5 L3.8 5.7 Z" stroke="#222" stroke-width="1.1" fill="none" stroke-linejoin="round"/></svg>
<div class="t" style="left:980px;top:655.375px;font-size:10px;color:#3a3f47;letter-spacing:-0.3px">1</div>
<div class="t" style="left:1058px;top:655.375px;font-size:10px;color:#3a3f47;letter-spacing:-0.3px;transform:translateX(-50%)">0</div>
<div class="t" style="left:1147px;top:655.375px;font-size:10px;color:#3a3f47;letter-spacing:-0.3px;transform:translateX(-50%)">455</div>
<div class="t" style="left:1196px;top:655.375px;font-size:10px;color:#7aba55">&#9651;</div>
<div class="t" style="left:1207px;top:653.875px;font-size:12.5px;font-weight:bold;color:#7aba55;letter-spacing:-0.3px">+455</div>
<svg class="ico" style="left:1321.0px;top:654.375px" width="12" height="12" viewBox="0 0 12 12"><rect width="12" height="12" rx="1.8" fill="#e35a57"/><path d="M4 4 L8 8 M8 4 L4 8" stroke="#fff" stroke-width="1.4"/></svg>
<div class="abs" style="left:12px;top:678.0px;width:1344px;height:38.25px;background:#ffffff;border-bottom:1.5px solid #e2e4e8"></div>
<div class="abs" style="left:951px;top:678.0px;width:62px;height:38.25px;background:#eff0f5"></div>
<div class="t" style="left:17px;top:693.625px;font-size:10px;color:#3a3f47;letter-spacing:-0.3px">posizionamento seo</div>
<div class="t" style="left:858px;top:693.625px;font-size:10px;color:#3a3f47;letter-spacing:-0.3px;letter-spacing:-0.55px;transform:translateX(-50%)">880</div>
<div class="t" style="left:925px;top:693.625px;font-size:10px;color:#3a3f47;letter-spacing:-0.3px;transform:translateX(-50%)">&gt; 50</div>
<svg class="ico" style="left:959.5px;top:692.125px" width="11" height="11" viewBox="0 0 11 11"><path d="M4.6 2.3 H2.1 Q1 2.3 1 3.4 V8.9 Q1 10 2.1 10 H7.6 Q8.7 10 8.7 8.9 V6.4" stroke="#222" stroke-width="1.2" fill="none"/><path d="M8.5 1 L10 2.5 L5.3 7.2 L3.5 7.5 L3.8 5.7 Z" stroke="#222" stroke-width="1.1" fill="none" stroke-linejoin="round"/></svg>
<div class="t" style="left:980px;top:693.625px;font-size:10px;color:#3a3f47;letter-spacing:-0.3px">1</div>
<div class="t" style="left:1058px;top:693.625px;font-size:10px;color:#3a3f47;letter-spacing:-0.3px;transform:translateX(-50%)">0</div>
<div class="t" style="left:1147px;top:693.625px;font-size:10px;color:#3a3f47;letter-spacing:-0.3px;transform:translateX(-50%)">400</div>
<div class="t" style="left:1196px;top:693.625px;font-size:10px;color:#7aba55">&#9651;</div>
<div class="t" style="left:1207px;top:692.125px;font-size:12.5px;font-weight:bold;color:#7aba55;letter-spacing:-0.3px">+400</div>
<svg class="ico" style="left:1321.0px;top:692.625px" width="12" height="12" viewBox="0 0 12 12"><rect width="12" height="12" rx="1.8" fill="#e35a57"/><path d="M4 4 L8 8 M8 4 L4 8" stroke="#fff" stroke-width="1.4"/></svg>
<div class="abs" style="left:12px;top:716.25px;width:1344px;height:38.25px;background:#f5f6f9;border-bottom:1.5px solid #e2e4e8"></div>
<div class="abs" style="left:951px;top:716.25px;width:62px;height:38.25px;background:#eff0f5"></div>
<div class="abs" style="left:898px;top:716.25px;width:53px;height:38.25px;background:#acd096"></div>
<div class="t" style="left:17px;top:731.875px;font-size:10px;color:#3a3f47;letter-spacing:-0.3px">meta description</div>
<svg class="ico" style="left:420px;top:730.875px" width="12" height="12" viewBox="0 0 12 12"><path d="M5 2 H1.5 V10.5 H10 V7" stroke="#777" stroke-width="1" fill="none"/><path d="M6.5 1 H11 V5.5 M11 1 L5.5 6.5" stroke="#777" stroke-width="1" fill="none"/></svg>
<div class="t" style="left:439px;top:731.875px;font-size:10px;color:#3a3f47;letter-spacing:-0.3px;letter-spacing:-0.08px">/che-cose-la-meta-description-seo-e-come-renderla-efficace/</div>
<div class="t" style="left:858px;top:731.875px;font-size:10px;color:#3a3f47;letter-spacing:-0.3px;letter-spacing:-0.55px;transform:translateX(-50%)">720</div>
<div class="t" style="left:925px;top:731.875px;font-size:10px;color:#3a3f47;letter-spacing:-0.3px;transform:translateX(-50%)">2</div>
<svg class="ico" style="left:959.5px;top:730.375px" width="11" height="11" viewBox="0 0 11 11"><path d="M4.6 2.3 H2.1 Q1 2.3 1 3.4 V8.9 Q1 10 2.1 10 H7.6 Q8.7 10 8.7 8.9 V6.4" stroke="#222" stroke-width="1.2" fill="none"/><path d="M8.5 1 L10 2.5 L5.3 7.2 L3.5 7.5 L3.8 5.7 Z" stroke="#222" stroke-width="1.1" fill="none" stroke-linejoin="round"/></svg>
<div class="t" style="left:980px;top:731.875px;font-size:10px;color:#3a3f47;letter-spacing:-0.3px">1</div>
<div class="t" style="left:1058px;top:731.875px;font-size:10px;color:#3a3f47;letter-spacing:-0.3px;transform:translateX(-50%)">113</div>
<div class="t" style="left:1147px;top:731.875px;font-size:10px;color:#3a3f47;letter-spacing:-0.3px;transform:translateX(-50%)">327</div>
<div class="t" style="left:1196px;top:731.875px;font-size:10px;color:#7aba55">&#9651;</div>
<div class="t" style="left:1207px;top:730.375px;font-size:12.5px;font-weight:bold;color:#7aba55;letter-spacing:-0.3px">+214</div>
<svg class="ico" style="left:1321.0px;top:730.875px" width="12" height="12" viewBox="0 0 12 12"><rect width="12" height="12" rx="1.8" fill="#e35a57"/><path d="M4 4 L8 8 M8 4 L4 8" stroke="#fff" stroke-width="1.4"/></svg>
<div class="abs" style="left:12px;top:754.5px;width:1344px;height:38.25px;background:#ffffff;border-bottom:1.5px solid #e2e4e8"></div>
<div class="abs" style="left:951px;top:754.5px;width:62px;height:38.25px;background:#eff0f5"></div>
<div class="abs" style="left:898px;top:754.5px;width:53px;height:38.25px;background:#acd096"></div>
<div class="t" style="left:17px;top:770.125px;font-size:10px;color:#3a3f47;letter-spacing:-0.3px">lunghezza meta description</div>
<svg class="ico" style="left:420px;top:769.125px" width="12" height="12" viewBox="0 0 12 12"><path d="M5 2 H1.5 V10.5 H10 V7" stroke="#777" stroke-width="1" fill="none"/><path d="M6.5 1 H11 V5.5 M11 1 L5.5 6.5" stroke="#777" stroke-width="1" fill="none"/></svg>
<div class="t" style="left:439px;top:770.125px;font-size:10px;color:#3a3f47;letter-spacing:-0.3px;letter-spacing:-0.08px">/che-cose-la-meta-description-seo-e-come-renderla-efficace/</div>
<div class="t" style="left:858px;top:770.125px;font-size:10px;color:#3a3f47;letter-spacing:-0.3px;letter-spacing:-0.55px;transform:translateX(-50%)">90</div>
<div class="t" style="left:925px;top:770.125px;font-size:10px;color:#3a3f47;letter-spacing:-0.3px;transform:translateX(-50%)">2</div>
<svg class="ico" style="left:959.5px;top:768.625px" width="11" height="11" viewBox="0 0 11 11"><path d="M4.6 2.3 H2.1 Q1 2.3 1 3.4 V8.9 Q1 10 2.1 10 H7.6 Q8.7 10 8.7 8.9 V6.4" stroke="#222" stroke-width="1.2" fill="none"/><path d="M8.5 1 L10 2.5 L5.3 7.2 L3.5 7.5 L3.8 5.7 Z" stroke="#222" stroke-width="1.1" fill="none" stroke-linejoin="round"/></svg>
<div class="t" style="left:980px;top:770.125px;font-size:10px;color:#3a3f47;letter-spacing:-0.3px">1</div>
<div class="t" style="left:1058px;top:770.125px;font-size:10px;color:#3a3f47;letter-spacing:-0.3px;transform:translateX(-50%)">14</div>
<div class="t" style="left:1147px;top:770.125px;font-size:10px;color:#3a3f47;letter-spacing:-0.3px;transform:translateX(-50%)">41</div>
<div class="t" style="left:1196px;top:770.125px;font-size:10px;color:#7aba55">&#9651;</div>
<div class="t" style="left:1207px;top:768.625px;font-size:12.5px;font-weight:bold;color:#7aba55;letter-spacing:-0.3px">+27</div>
<svg class="ico" style="left:1321.0px;top:769.125px" width="12" height="12" viewBox="0 0 12 12"><rect width="12" height="12" rx="1.8" fill="#e35a57"/><path d="M4 4 L8 8 M8 4 L4 8" stroke="#fff" stroke-width="1.4"/></svg>
<div id="right" class="abs"></div>
<div class="t" style="left:1384px;top:101.5px;font-size:12px;font-weight:bold;color:#4a5364;letter-spacing:0px">Keyword</div>
<div class="abs" style="left:1384px;top:124px;width:647px;height:27px;border:1px solid #d9dbde;border-radius:3px"></div>
<div class="t" style="left:1389px;top:132.5px;font-size:11.2px;color:#222;letter-spacing:0.05px">meta description</div>
<div class="t" style="left:1384px;top:169.5px;font-size:12px;font-weight:bold;color:#4a5364;letter-spacing:0px">* Contiene</div>
<div class="t" style="left:1718px;top:169.5px;font-size:12px;font-weight:bold;color:#4a5364;letter-spacing:0px">* Non Contiene</div>
<div class="abs" style="left:1384px;top:191px;width:313px;height:28px;border:1px solid #d9dbde;border-radius:3px"></div>
<div class="abs" style="left:1664px;top:191px;width:33px;height:28px;background:#fcc10a;border-radius:0 3px 3px 0"></div>
<svg class="ico" style="left:1674px;top:198px" width="13" height="13" viewBox="0 0 13 13"><path d="M2.2 10.8 L9.8 3.2" stroke="#222" stroke-width="3.2" stroke-linecap="round"/><path d="M1.2 11.8 L2.2 9.2 L3.8 10.8Z" fill="#222"/></svg>
<div class="t" style="left:1388px;top:199.5px;font-size:12.5px;color:#6b6f76;letter-spacing:-0.1px">Inserisci i termini e premi Invio dopo ogni termine</div>
<div class="abs" style="left:1718px;top:191px;width:313px;height:28px;border:1px solid #d9dbde;border-radius:3px"></div>
<div class="abs" style="left:1998px;top:191px;width:33px;height:28px;background:#fcc10a;border-radius:0 3px 3px 0"></div>
<svg class="ico" style="left:2008px;top:198px" width="13" height="13" viewBox="0 0 13 13"><path d="M2.2 10.8 L9.8 3.2" stroke="#222" stroke-width="3.2" stroke-linecap="round"/><path d="M1.2 11.8 L2.2 9.2 L3.8 10.8Z" fill="#222"/></svg>
<div class="t" style="left:1722px;top:199.5px;font-size:12.5px;color:#6b6f76;letter-spacing:-0.1px">Inserisci i termini e premi Invio dopo ogni termine</div>
<div class="t" style="left:1384px;top:237.5px;font-size:11.8px;color:#2f87e8;letter-spacing:-0.1px">Mostra filtri</div>
<svg class="ico" style="left:1444px;top:241px" width="8" height="5" viewBox="0 0 8 5"><path d="M0.5 0.5 H7.5 L4 4.5Z" fill="#2f87e8"/></svg>
<div class="abs" style="left:1947px;top:233px;width:84px;height:21px;background:#5bc6ef;border-radius:3px"></div>
<svg class="ico" style="left:1963px;top:237px" width="13" height="13" viewBox="0 0 13 13"><circle cx="5.3" cy="5.3" r="4" fill="none" stroke="#fff" stroke-width="1.7"/><path d="M8.2 8.2 L11.8 11.8" stroke="#fff" stroke-width="1.9"/></svg>
<div class="t" style="left:1977px;top:237px;font-size:12.5px;color:#fff;letter-spacing:-0.3px">Cerca</div>
<div class="t" style="left:1391px;top:293.5px;font-size:15.5px;color:#f47f20;letter-spacing:-0.2px">Keyword</div>
<div class="abs" style="left:1997px;top:290px;width:27px;height:27px;border:1.3px solid #2b2f36;border-radius:4px;background:#fff"></div>
<svg class="ico" style="left:2004px;top:297px" width="13" height="13" viewBox="0 0 13 13"><path d="M4.5 1 H12 V12 H4.5 M4.5 1 V3.5 M4.5 12 V9.5" stroke="#222" stroke-width="1.3" fill="none"/><path d="M0.8 6.5 H8.5 M5.8 3.8 L8.6 6.5 L5.8 9.2" stroke="#222" stroke-width="1.3" fill="none"/></svg>
<div class="abs" style="left:1384px;top:320px;width:647px;height:43px;background:#6aaad6;border-bottom:1.5px solid #d6d9de"></div>
<div class="t" style="left:1434px;top:336.5px;font-size:10px;font-weight:bold;color:#fff;letter-spacing:-0.3px">Keyword</div>
<div class="t" style="left:1977px;top:336.5px;font-size:10px;font-weight:bold;color:#fff;letter-spacing:-0.3px;transform:translateX(-50%)">Vol</div>
<svg class="ico" style="left:2022px;top:334px" width="6" height="14" viewBox="0 0 6 14"><path d="M3 0.5 V12.5 M1 10 L3 12.8 L5 10" stroke="#fff" stroke-width="1" fill="none"/></svg>
<div class="abs" style="left:1384px;top:363.0px;width:647px;height:27.83px;background:#ffffff;border-bottom:1px solid #e3e5ea"></div>
<svg class="ico" style="left:1400.0px;top:372.21500000000003px" width="12" height="12" viewBox="0 0 12 12"><rect width="12" height="12" rx="1.8" fill="#e35a57"/><path d="M4 4 L8 8 M8 4 L4 8" stroke="#fff" stroke-width="1.4"/></svg>
<div class="t" style="left:1434px;top:373.21500000000003px;font-size:10px;color:#3a3f47;letter-spacing:-0.25px">meta description</div>
<div class="t" style="left:1977px;top:373.21500000000003px;font-size:10px;color:#3a3f47;letter-spacing:-0.25px;transform:translateX(-50%)">720</div>
<div class="abs" style="left:1384px;top:390.83px;width:647px;height:27.83px;background:#f5f6f9;border-bottom:1px solid #e3e5ea"></div>
<svg class="ico" style="left:1400.0px;top:400.045px" width="12" height="12" viewBox="0 0 12 12"><rect width="12" height="12" rx="1.8" fill="#7cb950"/><path d="M6 3.3 V8.7 M3.3 6 H8.7" stroke="#fff" stroke-width="1.5"/></svg>
<div class="t" style="left:1434px;top:401.045px;font-size:10px;color:#3a3f47;letter-spacing:-0.25px">meta description caratteri accentati</div>
<div class="t" style="left:1977px;top:401.045px;font-size:10px;color:#3a3f47;letter-spacing:-0.25px;transform:translateX(-50%)">210</div>
<div class="abs" style="left:1384px;top:418.65999999999997px;width:647px;height:27.83px;background:#ffffff;border-bottom:1px solid #e3e5ea"></div>
<svg class="ico" style="left:1400.0px;top:427.875px" width="12" height="12" viewBox="0 0 12 12"><rect width="12" height="12" rx="1.8" fill="#7cb950"/><path d="M6 3.3 V8.7 M3.3 6 H8.7" stroke="#fff" stroke-width="1.5"/></svg>
<div class="t" style="left:1434px;top:428.875px;font-size:10px;color:#3a3f47;letter-spacing:-0.25px">meta description cos'è</div>
<div class="t" style="left:1977px;top:428.875px;font-size:10px;color:#3a3f47;letter-spacing:-0.25px;transform:translateX(-50%)">170</div>
<div class="abs" style="left:1384px;top:446.49px;width:647px;height:27.83px;background:#f5f6f9;border-bottom:1px solid #e3e5ea"></div>
<svg class="ico" style="left:1400.0px;top:455.70500000000004px" width="12" height="12" viewBox="0 0 12 12"><rect width="12" height="12" rx="1.8" fill="#7cb950"/><path d="M6 3.3 V8.7 M3.3 6 H8.7" stroke="#fff" stroke-width="1.5"/></svg>
<div class="t" style="left:1434px;top:456.70500000000004px;font-size:10px;color:#3a3f47;letter-spacing:-0.25px">description meta tags</div>
<div class="t" style="left:1977px;top:456.70500000000004px;font-size:10px;color:#3a3f47;letter-spacing:-0.25px;transform:translateX(-50%)">140</div>
<div class="abs" style="left:1384px;top:474.32px;width:647px;height:27.83px;background:#ffffff;border-bottom:1px solid #e3e5ea"></div>
<svg class="ico" style="left:1400.0px;top:483.535px" width="12" height="12" viewBox="0 0 12 12"><rect width="12" height="12" rx="1.8" fill="#7cb950"/><path d="M6 3.3 V8.7 M3.3 6 H8.7" stroke="#fff" stroke-width="1.5"/></svg>
<div class="t" style="left:1434px;top:484.535px;font-size:10px;color:#3a3f47;letter-spacing:-0.25px">meta tag description</div>
<div class="t" style="left:1977px;top:484.535px;font-size:10px;color:#3a3f47;letter-spacing:-0.25px;transform:translateX(-50%)">110</div>
<div class="abs" style="left:1384px;top:502.15px;width:647px;height:27.83px;background:#f5f6f9;border-bottom:1px solid #e3e5ea"></div>
<svg class="ico" style="left:1400.0px;top:511.3649999999999px" width="12" height="12" viewBox="0 0 12 12"><rect width="12" height="12" rx="1.8" fill="#7cb950"/><path d="M6 3.3 V8.7 M3.3 6 H8.7" stroke="#fff" stroke-width="1.5"/></svg>
<div class="t" style="left:1434px;top:512.3649999999999px;font-size:10px;color:#3a3f47;letter-spacing:-0.25px">meta description tag</div>
<div class="t" style="left:1977px;top:512.3649999999999px;font-size:10px;color:#3a3f47;letter-spacing:-0.25px;transform:translateX(-50%)">110</div>
<div class="abs" style="left:1384px;top:529.98px;width:647px;height:27.83px;background:#ffffff;border-bottom:1px solid #e3e5ea"></div>
<svg class="ico" style="left:1400.0px;top:539.1949999999999px" width="12" height="12" viewBox="0 0 12 12"><rect width="12" height="12" rx="1.8" fill="#7cb950"/><path d="M6 3.3 V8.7 M3.3 6 H8.7" stroke="#fff" stroke-width="1.5"/></svg>
<div class="t" style="left:1434px;top:540.1949999999999px;font-size:10px;color:#3a3f47;letter-spacing:-0.25px">description meta tag</div>
<div class="t" style="left:1977px;top:540.1949999999999px;font-size:10px;color:#3a3f47;letter-spacing:-0.25px;transform:translateX(-50%)">110</div>
<div class="abs" style="left:1384px;top:557.81px;width:647px;height:27.83px;background:#f5f6f9;border-bottom:1px solid #e3e5ea"></div>
<svg class="ico" style="left:1400.0px;top:567.0249999999999px" width="12" height="12" viewBox="0 0 12 12"><rect width="12" height="12" rx="1.8" fill="#7cb950"/><path d="M6 3.3 V8.7 M3.3 6 H8.7" stroke="#fff" stroke-width="1.5"/></svg>
<div class="t" style="left:1434px;top:568.0249999999999px;font-size:10px;color:#3a3f47;letter-spacing:-0.25px">meta tags description</div>
<div class="t" style="left:1977px;top:568.0249999999999px;font-size:10px;color:#3a3f47;letter-spacing:-0.25px;transform:translateX(-50%)">110</div>
<div class="abs" style="left:1384px;top:585.64px;width:647px;height:27.83px;background:#ffffff;border-bottom:1px solid #e3e5ea"></div>
<svg class="ico" style="left:1400.0px;top:594.8549999999999px" width="12" height="12" viewBox="0 0 12 12"><rect width="12" height="12" rx="1.8" fill="#7cb950"/><path d="M6 3.3 V8.7 M3.3 6 H8.7" stroke="#fff" stroke-width="1.5"/></svg>
<div class="t" style="left:1434px;top:595.8549999999999px;font-size:10px;color:#3a3f47;letter-spacing:-0.25px">meta description wordpress</div>
<div class="t" style="left:1977px;top:595.8549999999999px;font-size:10px;color:#3a3f47;letter-spacing:-0.25px;transform:translateX(-50%)">90</div>
<div class="abs" style="left:1384px;top:613.47px;width:647px;height:27.83px;background:#f5f6f9;border-bottom:1px solid #e3e5ea"></div>
<svg class="ico" style="left:1400.0px;top:622.685px" width="12" height="12" viewBox="0 0 12 12"><rect width="12" height="12" rx="1.8" fill="#7cb950"/><path d="M6 3.3 V8.7 M3.3 6 H8.7" stroke="#fff" stroke-width="1.5"/></svg>
<div class="t" style="left:1434px;top:623.685px;font-size:10px;color:#3a3f47;letter-spacing:-0.25px">html meta description</div>
<div class="t" style="left:1977px;top:623.685px;font-size:10px;color:#3a3f47;letter-spacing:-0.25px;transform:translateX(-50%)">90</div>
<div class="abs" style="left:1384px;top:641.3px;width:647px;height:27.83px;background:#ffffff;border-bottom:1px solid #e3e5ea"></div>
<svg class="ico" style="left:1400.0px;top:650.5149999999999px" width="12" height="12" viewBox="0 0 12 12"><rect width="12" height="12" rx="1.8" fill="#7cb950"/><path d="M6 3.3 V8.7 M3.3 6 H8.7" stroke="#fff" stroke-width="1.5"/></svg>
<div class="t" style="left:1434px;top:651.5149999999999px;font-size:10px;color:#3a3f47;letter-spacing:-0.25px">meta description html</div>
<div class="t" style="left:1977px;top:651.5149999999999px;font-size:10px;color:#3a3f47;letter-spacing:-0.25px;transform:translateX(-50%)">90</div>
<div class="abs" style="left:1384px;top:669.13px;width:647px;height:27.83px;background:#f5f6f9;border-bottom:1px solid #e3e5ea"></div>
<svg class="ico" style="left:1400.0px;top:678.3449999999999px" width="12" height="12" viewBox="0 0 12 12"><rect width="12" height="12" rx="1.8" fill="#7cb950"/><path d="M6 3.3 V8.7 M3.3 6 H8.7" stroke="#fff" stroke-width="1.5"/></svg>
<div class="t" style="left:1434px;top:679.3449999999999px;font-size:10px;color:#3a3f47;letter-spacing:-0.25px">wordpress meta description</div>
<div class="t" style="left:1977px;top:679.3449999999999px;font-size:10px;color:#3a3f47;letter-spacing:-0.25px;transform:translateX(-50%)">90</div>
<div class="abs" style="left:1384px;top:696.96px;width:647px;height:27.83px;background:#ffffff;border-bottom:1px solid #e3e5ea"></div>
<svg class="ico" style="left:1400.0px;top:706.175px" width="12" height="12" viewBox="0 0 12 12"><rect width="12" height="12" rx="1.8" fill="#7cb950"/><path d="M6 3.3 V8.7 M3.3 6 H8.7" stroke="#fff" stroke-width="1.5"/></svg>
<div class="t" style="left:1434px;top:707.175px;font-size:10px;color:#3a3f47;letter-spacing:-0.25px">meta description length</div>
<div class="t" style="left:1977px;top:707.175px;font-size:10px;color:#3a3f47;letter-spacing:-0.25px;transform:translateX(-50%)">90</div>
<div class="abs" style="left:1384px;top:724.79px;width:647px;height:27.83px;background:#f5f6f9;border-bottom:1px solid #e3e5ea"></div>
<svg class="ico" style="left:1400.0px;top:734.0049999999999px" width="12" height="12" viewBox="0 0 12 12"><rect width="12" height="12" rx="1.8" fill="#e35a57"/><path d="M4 4 L8 8 M8 4 L4 8" stroke="#fff" stroke-width="1.4"/></svg>
<div class="t" style="left:1434px;top:735.0049999999999px;font-size:10px;color:#3a3f47;letter-spacing:-0.25px">lunghezza meta description</div>
<div class="t" style="left:1977px;top:735.0049999999999px;font-size:10px;color:#3a3f47;letter-spacing:-0.25px;transform:translateX(-50%)">90</div>
<div class="abs" style="left:1384px;top:752.62px;width:647px;height:27.83px;background:#ffffff;border-bottom:1px solid #e3e5ea"></div>
<svg class="ico" style="left:1400.0px;top:761.8349999999999px" width="12" height="12" viewBox="0 0 12 12"><rect width="12" height="12" rx="1.8" fill="#7cb950"/><path d="M6 3.3 V8.7 M3.3 6 H8.7" stroke="#fff" stroke-width="1.5"/></svg>
<div class="t" style="left:1434px;top:762.8349999999999px;font-size:10px;color:#3a3f47;letter-spacing:-0.25px">meta description esempio</div>
<div class="t" style="left:1977px;top:762.8349999999999px;font-size:10px;color:#3a3f47;letter-spacing:-0.25px;transform:translateX(-50%)">90</div>
<div class="abs" style="left:1428px;top:320px;width:1px;height:42px;background:#9cc6e6"></div>
<div class="abs" style="left:1923px;top:320px;width:1px;height:42px;background:#9cc6e6"></div>
<div class="abs" style="left:1428px;top:362px;width:1px;height:417.45px;background:#e3e5ea"></div>
<div class="abs" style="left:1923px;top:362px;width:1px;height:417.45px;background:#e3e5ea"></div></body></html>
